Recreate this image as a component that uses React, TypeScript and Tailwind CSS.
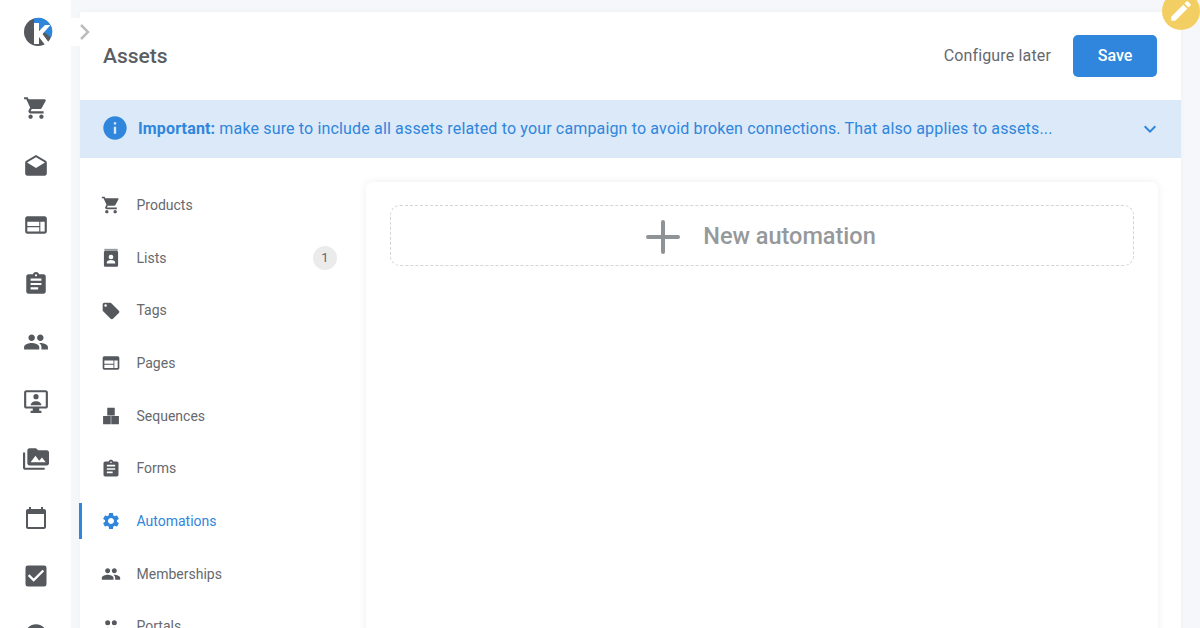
import type { ReactNode } from "react";
import {
  MdAssignment,
  MdCheckBox,
  MdDrafts,
  MdEdit,
  MdInfo,
  MdKeyboardArrowDown,
  MdLocalOffer,
  MdPeople,
  MdPermMedia,
  MdSettings,
  MdShoppingCart,
  MdWeb,
} from "react-icons/md";

function CalendarIcon({ size }: { size: number }) {
  return (
    <svg width={size} height={size} viewBox="0 0 24 24" fill="currentColor">
      <path d="M20 3h-1V1h-2v2H7V1H5v2H4c-1.1 0-2 .9-2 2v16c0 1.1.9 2 2 2h16c1.1 0 2-.9 2-2V5c0-1.1-.9-2-2-2zm0 18H4V8h16v13z" />
    </svg>
  );
}

function PresenterIcon({ size }: { size: number }) {
  return (
    <svg width={size} height={size} viewBox="0 0 24 24" fill="currentColor">
      <path d="M21 2H3c-1.1 0-2 .9-2 2v13c0 1.1.9 2 2 2h6v2H7v2h10v-2h-2v-2h6c1.1 0 2-.9 2-2V4c0-1.1-.9-2-2-2zm0 15H3V4h18v13z" />
      <circle cx="12" cy="8" r="2.4" />
      <path d="M7 16c0-2.4 2.6-3.8 5-3.8s5 1.4 5 3.8H7z" />
    </svg>
  );
}

function ListsIcon({ size }: { size: number }) {
  return (
    <svg width={size} height={size} viewBox="0 0 24 24" fill="currentColor">
      <path d="M4 1h16v2.500H4z" opacity="0.6" />
      <path d="M5 3.500h14a1.500 1.500 0 0 1 1.500 1.500v16a1.500 1.500 0 0 1-1.500 1.500H5A1.500 1.500 0 0 1 3.500 21V5A1.500 1.500 0 0 1 5 3.500zm7 4.500a2.800 2.800 0 1 0 0 5.600 2.800 2.800 0 0 0 0-5.600zM7 18.500h10v-1.500c0-1.900-3.200-2.700-5-2.700s-5 .8-5 2.700v1.500z" fillRule="evenodd" />
    </svg>
  );
}

function SequencesIcon({ size }: { size: number }) {
  return (
    <svg width={size} height={size} viewBox="0 0 24 24" fill="currentColor">
      <path d="M7.500 2h9v9.300h-9zM2.500 12h9.200v10H2.500zM12.300 12h9.200v10h-9.200z" />
    </svg>
  );
}

function PortalsIcon({ size }: { size: number }) {
  return (
    <svg width={size} height={size} viewBox="0 0 24 24" fill="currentColor">
      <circle cx="8" cy="7" r="3" />
      <circle cx="16" cy="7" r="3" />
      <circle cx="8" cy="16" r="3" />
      <circle cx="16" cy="16" r="3" />
    </svg>
  );
}

function GlobeIcon({ size }: { size: number }) {
  return (
    <svg width={size} height={size} viewBox="0 0 24 24" fill="currentColor">
      <path d="M12 2a10 10 0 1 0 0 20 10 10 0 0 0 0-20zM5 9c2-4.500 12-4.500 14 0H5z" fillRule="evenodd" />
    </svg>
  );
}

function Logo() {
  return (
    <svg width="30" height="30" viewBox="0 0 30 30">
      <circle cx="15" cy="15" r="14" fill="#55585d" />
      <path d="M11 1.500 A14 14 0 0 1 28 20.500 L17 12 L11 12 Z" fill="#2d86dc" />
      <path d="M11 6h5v8l6-6h5.500l-8 9 8.500 11.500h-5.500L16 20v7h-5z" fill="#ffffff" />
    </svg>
  );
}

function PlusIcon() {
  return (
    <svg width="34" height="34" viewBox="0 0 34 34" fill="none" stroke="#8f9396" strokeWidth="4" strokeLinecap="round">
      <path d="M17 2v30M2 17h30" />
    </svg>
  );
}

const railIcons: ReactNode[] = [
  <MdShoppingCart key="cart" size={26} />,
  <MdDrafts key="mail" size={26} />,
  <MdWeb key="web" size={26} />,
  <MdAssignment key="assign" size={26} />,
  <MdPeople key="people" size={26} />,
  <PresenterIcon key="present" size={26} />,
  <MdPermMedia key="media" size={26} />,
  <CalendarIcon key="cal" size={24} />,
  <MdCheckBox key="check" size={28} />,
  <GlobeIcon key="globe" size={26} />,
];

const assetItems = [
  { label: "Products", icon: <MdShoppingCart size={20} /> },
  { label: "Lists", icon: <ListsIcon size={20} />, count: 1 },
  { label: "Tags", icon: <MdLocalOffer size={20} /> },
  { label: "Pages", icon: <MdWeb size={20} /> },
  { label: "Sequences", icon: <SequencesIcon size={20} /> },
  { label: "Forms", icon: <MdAssignment size={20} /> },
  { label: "Automations", icon: <MdSettings size={20} />, active: true },
  { label: "Memberships", icon: <MdPeople size={20} /> },
  { label: "Portals", icon: <PortalsIcon size={20} /> },
];

function AssetRow({ label, icon, count, active }: { label: string; icon: ReactNode; count?: number; active?: boolean }) {
  return (
    <div className={`relative flex h-[52.700px] shrink-0 items-center pl-[21px] pr-[29px] text-[14px] ${active ? "text-[#2f86dc]" : "text-[#66696e]"}`}>
      {active && <div className="absolute -left-[1px] top-[8px] h-[36px] w-[3px] bg-[#2f86dc]" />}
      <div className={`flex w-[35.500px] shrink-0 ${active ? "text-[#2f86dc]" : "text-[#55585d]"}`}>{icon}</div>
      <span className="flex-1">{label}</span>
      {count !== undefined && (
        <span className="flex h-[24px] w-[24px] items-center justify-center rounded-full bg-[#ebebeb] text-[13px] text-[#63666b]">{count}</span>
      )}
    </div>
  );
}

export default function App() {
  return (
    <div className="relative flex h-[628px] w-[1200px] overflow-hidden bg-[#f6f7fb] font-['Roboto',sans-serif]">
      <aside className="flex w-[71px] shrink-0 flex-col items-center bg-white pt-[17px]">
        <div className="ml-[5px] h-[44px]">
          <Logo />
        </div>
        <div className="flex flex-col items-center pt-[32px] text-[#55585d]">
          {railIcons.map((icon, i) => (
            <div key={i} className="flex h-[58.500px] items-center justify-center">
              {icon}
            </div>
          ))}
        </div>
      </aside>

      <main className="ml-[9px] mt-[12px] flex h-[640px] w-[1101px] shrink-0 flex-col bg-white shadow-[0_0_6px_rgba(0,0,0,0.03)]">
        <header className="flex h-[88px] shrink-0 items-center justify-between pl-[23px] pr-[24px]">
          <h1 className="pt-[2px] text-[21px] font-medium text-[#5a5d62]">Assets</h1>
          <div className="flex items-center gap-[22px]">
            <span className="text-[16px] tracking-[0.15px] text-[#66696e]">Configure later</span>
            <button className="h-[42px] w-[84px] rounded-[5px] bg-[#2f86dc] text-[16px] font-medium text-white">Save</button>
          </div>
        </header>

        <div className="flex h-[58px] shrink-0 items-center bg-[#dce9f8] pl-[22px] pr-[19px] text-[16px] text-[#2f86dc]">
          <MdInfo size={28} className="-ml-[1px] mr-[9px] -mt-[3px] shrink-0" />
          <p className="flex-1 whitespace-nowrap tracking-[0.155px]">
            <strong className="font-bold">Important:</strong> make sure to include all assets related to your campaign to avoid broken connections. That also applies to assets...
          </p>
          <MdKeyboardArrowDown size={24} className="shrink-0" />
        </div>

        <div className="flex min-h-0 flex-1">
          <nav className="flex w-[286px] shrink-0 flex-col pt-[21px]">
            {assetItems.map((item) => (
              <AssetRow key={item.label} {...item} />
            ))}
          </nav>
          <section className="mt-[24px] h-[500px] w-[792px] rounded-t-[6px] bg-white p-[24px] pt-[23px] shadow-[0_0_8px_rgba(0,0,0,0.07)]">
            <div className="flex h-[61px] items-center justify-center gap-[23px] rounded-[10px] border border-dashed border-[#d4d4d4] pr-[2px] pt-[2px] text-[#96999b]">
              <PlusIcon />
              <span className="text-[23.500px] font-medium">New automation</span>
            </div>
          </section>
        </div>
      </main>

      <button className="absolute left-[71px] top-[18px] flex h-[28px] w-[28px] items-center justify-center rounded-r-[8px] bg-white text-[#bdbdbd]">
        <svg width="12" height="18" viewBox="0 0 12 18" fill="none" stroke="currentColor" strokeWidth="2.500">
          <path d="M2 2l7 7-7 7" />
        </svg>
      </button>

      <div className="absolute left-[1162px] top-[-8px] flex h-[38px] w-[38px] items-center justify-center rounded-full bg-[#f3cf63] text-white">
        <MdEdit size={26} />
      </div>
    </div>
  );
}
